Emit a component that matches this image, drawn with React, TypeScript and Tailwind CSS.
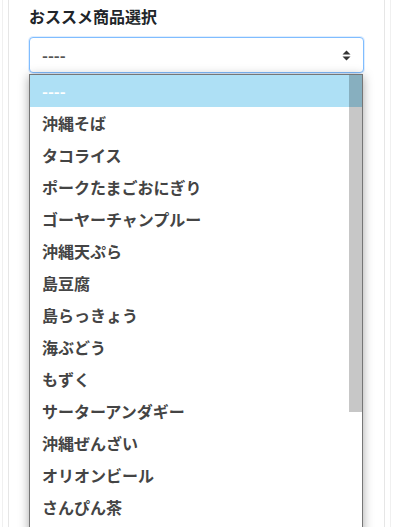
import React from 'react';

const items = [
  '沖縄そば',
  'タコライス',
  'ポークたまごおにぎり',
  'ゴーヤーチャンプルー',
  '沖縄天ぷら',
  '島豆腐',
  '島らっきょう',
  '海ぶどう',
  'もずく',
  'サーターアンダギー',
  '沖縄ぜんざい',
  'オリオンビール',
  'さんぴん茶',
];

export default function App() {
  return (
    <div
      className="h-[527px] overflow-hidden bg-white px-[2px]"
      style={{ fontFamily: '"Noto Sans CJK JP", "Noto Sans", sans-serif' }}
    >
      <div className="h-full border-x border-[#f0f0f0] px-[5px]">
        <div className="h-full border-x border-[#e6e6e6] px-[20px] pt-[4px]">
          <label className="block text-base font-bold leading-6 text-[#212529]">おススメ商品選択</label>

          <div className="relative mt-[9px]">
            {/* select box */}
            <div className="flex h-[36px] items-center justify-between rounded-[4px] border border-[#80bdff] bg-white pl-[12px] pr-[12px] shadow-[0_0_0_1px_rgba(128,189,255,0.25)]">
              <span className="text-base font-bold text-[#555]">----</span>
              <svg width="9" height="11" viewBox="0 0 9 11" className="text-[#333]">
                <path d="M4.5 0.5 L8.5 4.5 L0.5 4.5 Z" fill="currentColor" />
                <path d="M4.5 10.5 L8.5 6.5 L0.5 6.5 Z" fill="currentColor" />
              </svg>
            </div>

            {/* open dropdown list */}
            <div className="absolute left-0 top-[37px] w-[334px] overflow-hidden border border-[#767676] bg-white shadow-[0_2px_10px_rgba(0,0,0,0.35)]">
              <div className="relative pb-8">
                <div className="flex h-8 items-center bg-[#aee0f5] pl-[12px] text-base font-bold text-white">----</div>
                {items.map((item) => (
                  <div key={item} className="flex h-8 items-center pl-[12px] text-base font-bold text-[#444]">
                    {item}
                  </div>
                ))}
                <div className="absolute right-0 top-0 h-[337px] w-[13px] bg-black/[0.22]" />
              </div>
            </div>
          </div>
        </div>
      </div>
    </div>
  );
}
